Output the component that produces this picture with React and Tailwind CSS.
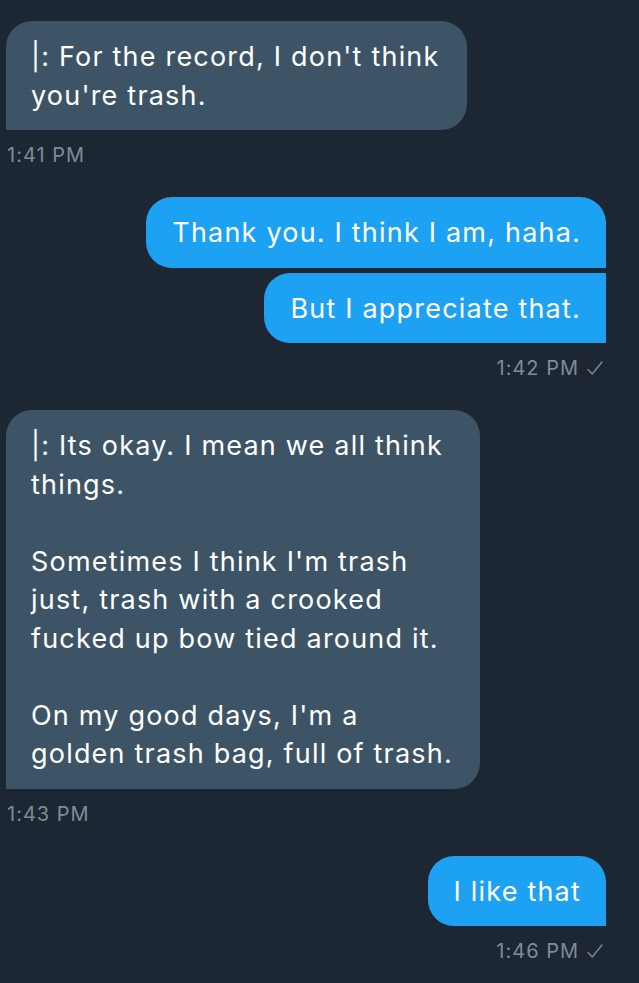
import React from "react";

const font = { fontFamily: 'Inter, "Liberation Sans", Arial, sans-serif' };

function Check() {
  return (
    <svg width="16" height="15" viewBox="0 0 16 15" className="ml-[8px]" fill="none">
      <path d="M1 8.5 L5.2 13 L15 1" stroke="#7e8c99" strokeWidth="1.3" strokeLinecap="round" strokeLinejoin="round" />
    </svg>
  );
}

function Received({ text, time }) {
  return (
    <div className="flex flex-col items-start pl-[6px]">
      <div className="bg-[#3d5466] text-white text-[27px] tracking-[1.2px] leading-[38.5px] pl-[25px] pr-[27px] pt-[17px] pb-[15px] rounded-[26px] rounded-bl-none whitespace-pre-line">
        {text}
      </div>
      <div className="mt-[13px] h-[24px] text-[20px] tracking-[1px] leading-[24px] text-[#7e8c99] pl-[1px]">{time}</div>
    </div>
  );
}

function Sent({ texts, time }) {
  return (
    <div className="flex flex-col items-end pr-[33px]">
      <div className="flex flex-col items-end gap-[5px]">
        {texts.map((t, i) => {
          const first = i === 0;
          return (
            <div
              key={i}
              className={
                "bg-[#1da1f2] text-white text-[27px] tracking-[1.2px] leading-[38.5px] pl-[26px] pr-[25px] pt-[17px] pb-[15px] rounded-l-[26px] whitespace-pre-line " +
                (first ? "rounded-tr-[26px]" : "")
              }
            >
              {t}
            </div>
          );
        })}
      </div>
      <div className="mt-[13px] h-[24px] text-[20px] tracking-[1px] leading-[24px] text-[#7e8c99] flex items-center pr-[3px]">
        {time}
        <Check />
      </div>
    </div>
  );
}

export default function App() {
  return (
    <div style={font} className="w-[639px] h-[983px] bg-[#1c2733] pt-[21px] flex flex-col gap-[30px] overflow-hidden">
      <Received text={"|: For the record, I don't think\nyou're trash."} time="1:41 PM" />
      <Sent texts={["Thank you. I think I am, haha.", "But I appreciate that."]} time="1:42 PM" />
      <Received
        text={
          "|: Its okay. I mean we all think\nthings.\n\nSometimes I think I'm trash\njust, trash with a crooked\nfucked up bow tied around it.\n\nOn my good days, I'm a\ngolden trash bag, full of trash."
        }
        time="1:43 PM"
      />
      <Sent texts={["I like that"]} time="1:46 PM" />
    </div>
  );
}
